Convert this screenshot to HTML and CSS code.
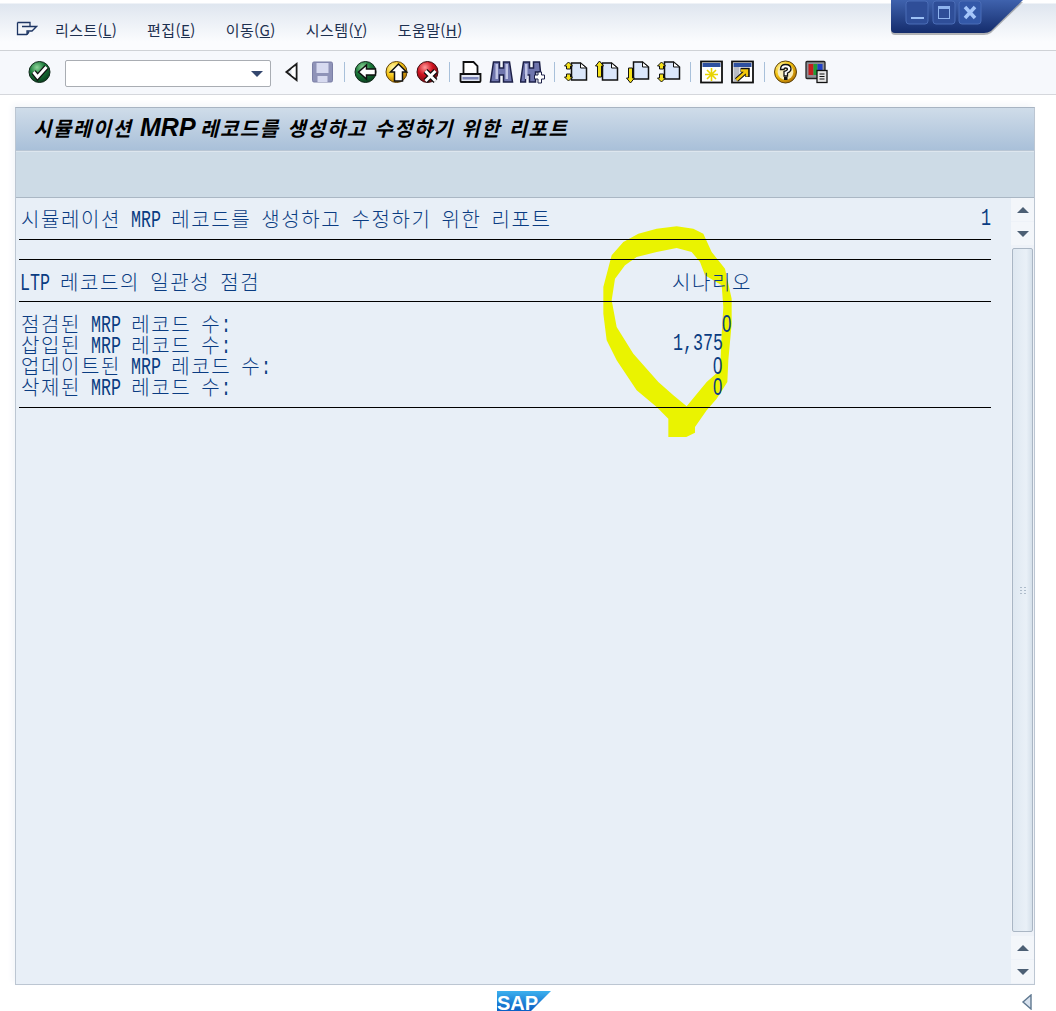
FILE: index.html
```html
<!DOCTYPE html>
<html lang="ko">
<head>
<meta charset="UTF-8">
<meta name="viewport" content="width=device-width, initial-scale=1.0">
<title>시뮬레이션 MRP 레코드를 생성하고 수정하기 위한 리포트</title>
<link rel="stylesheet" href="styles.css">
</head>
<body>

<!-- window buttons -->
<div class="winbox">
  <svg width="150" height="42" viewBox="0 0 150 42">
    <defs>
      <linearGradient id="winfill" x1="0" y1="0" x2="0" y2="1">
        <stop offset="0" stop-color="#3f62ad"/>
        <stop offset="1" stop-color="#142c6c"/>
      </linearGradient>
      <radialGradient id="ballgreen" cx=".38" cy=".28" r=".8">
        <stop offset="0" stop-color="#8fd69a"/>
        <stop offset=".45" stop-color="#1b7a3a"/>
        <stop offset="1" stop-color="#07361a"/>
      </radialGradient>
      <radialGradient id="ballyellow" cx=".35" cy=".3" r=".8">
        <stop offset="0" stop-color="#fff9b0"/>
        <stop offset=".5" stop-color="#f5c412"/>
        <stop offset="1" stop-color="#a56400"/>
      </radialGradient>
      <radialGradient id="ballred" cx=".38" cy=".28" r=".8">
        <stop offset="0" stop-color="#ff9a9a"/>
        <stop offset=".45" stop-color="#d0121f"/>
        <stop offset="1" stop-color="#5e0a10"/>
      </radialGradient>
    </defs>
    <path d="M1 0H133L101 31Q98 33 94 33H5Q1 33 1 29Z" fill="#000" opacity=".28" transform="translate(0 2)"/>
    <path d="M1 0H133L101 31Q98 33 94 33H5Q1 33 1 29Z" fill="url(#winfill)"/>
    <rect x="16" y="1" width="22" height="23" rx="3" fill="#2f4e98" stroke="#4a6cb6"/>
    <rect x="43" y="1" width="22" height="23" rx="3" fill="#2f4e98" stroke="#4a6cb6"/>
    <rect x="69" y="1" width="22" height="23" rx="3" fill="#3358a8" stroke="#4a6cb6"/>
    <rect x="21" y="17" width="13" height="2" fill="#9cc0f5"/>
    <rect x="48.500" y="6.500" width="11" height="12" fill="none" stroke="#8fb4ee"/>
    <rect x="48" y="6" width="12" height="3" fill="#8fb4ee"/>
    <path d="M75 7L85 18M85 7L75 18" stroke="#a5c6fa" stroke-width="3.500"/>
  </svg>
</div>

<div class="menubar">
  <svg class="menu-icon" width="22" height="16" viewBox="0 0 22 16">
    <path d="M1.500 1.500H14V5M1.500 1.500V13.500H11M6 5.500H20.500L16 10H11V13.500M11 13.500L13 11" fill="none" stroke="#1d3563" stroke-width="1.300"/>
  </svg>
  <span class="menu-item">리스트(<u>L</u>)</span>
  <span class="menu-item">편집(<u>E</u>)</span>
  <span class="menu-item">이동(<u>G</u>)</span>
  <span class="menu-item">시스템(<u>Y</u>)</span>
  <span class="menu-item">도움말(<u>H</u>)</span>
</div>

<div class="toolbar">
  <svg class="tool" width="25" height="24" viewBox="0 0 24 24">
    <circle cx="12" cy="12" r="10.500" fill="url(#ballgreen)" stroke="#10281a"/>
    <path d="M6 12L10 17L19 7" fill="none" stroke="#111" stroke-width="5.500"/>
    <path d="M6 12L10 17L19 7" fill="none" stroke="#fff" stroke-width="3"/>
  </svg>
  <div class="combo"><span class="combo-arrow"></span></div>
  <svg class="tool" width="25" height="24" viewBox="0 0 24 24">
    <path d="M17 4V20L7 12Z" fill="#dfe4ec" stroke="#1c1c1c" stroke-width="2"/>
    <path d="M16 6V18L12 15V9Z" fill="#fff"/>
  </svg>
  <svg class="tool" width="25" height="24" viewBox="0 0 24 24">
    <rect x="2" y="2" width="20" height="20" rx="1.500" fill="#8f93b8" stroke="#7b7fa6"/>
    <rect x="6" y="3" width="12" height="10" fill="#d7daf0"/>
    <rect x="7" y="16" width="10" height="6" fill="#d7daf0"/>
  </svg>
  <span class="sep"></span>
  <svg class="tool" width="25" height="24" viewBox="0 0 24 24">
    <circle cx="12" cy="12" r="10.500" fill="url(#ballgreen)" stroke="#10281a"/>
    <path d="M5 12L13 5V9H22V15H13V19Z" fill="#fff" stroke="#111" stroke-width="1.500"/>
  </svg>
  <svg class="tool" width="25" height="24" viewBox="0 0 24 24">
    <circle cx="12" cy="12" r="10.500" fill="url(#ballyellow)" stroke="#5e430a"/>
    <path d="M14 4L22 12H18V21H10V12H6Z" fill="#fff" stroke="#111" stroke-width="1.500"/>
  </svg>
  <svg class="tool" width="25" height="24" viewBox="0 0 24 24">
    <circle cx="12" cy="12" r="10.500" fill="url(#ballred)" stroke="#3e0d10"/>
    <path d="M10 11L20 21M20 11L10 21" stroke="#111" stroke-width="5.500"/>
    <path d="M10 11L20 21M20 11L10 21" stroke="#fff" stroke-width="3"/>
  </svg>
  <span class="sep"></span>
  <svg class="tool" width="25" height="24" viewBox="0 0 24 24">
    <path d="M5 2H15L19 6V14H5Z" fill="#fff" stroke="#111" stroke-width="1.800"/>
    <path d="M2 14H22V21Q22 22 21 22H3Q2 22 2 21Z" fill="#e3e7f2" stroke="#111" stroke-width="1.800"/>
    <rect x="4" y="17" width="16" height="2.500" fill="#7d86b8"/>
  </svg>
  <svg class="tool" width="25" height="24" viewBox="0 0 24 24">
    <path d="M4 2H10V8H14V2H20L23 22H14V15H10V22H1Z" fill="#6f75ad" stroke="#1d2048" stroke-width="1.500"/>
    <rect x="6" y="4" width="2.500" height="15" fill="#c2c6e6"/>
    <rect x="16" y="4" width="2.500" height="15" fill="#c2c6e6"/>
  </svg>
  <svg class="tool" width="25" height="24" viewBox="0 0 24 24">
    <path d="M3 2H9V8H13V2H19L20 12H15V22H9V15H5V22H0Z" fill="#6f75ad" stroke="#1d2048" stroke-width="1.500"/>
    <rect x="4.500" y="4" width="2.500" height="15" fill="#c2c6e6"/>
    <path d="M14 15H17.500V12H21V15H24V19H21V23H17.500V19H14Z" fill="#fff" stroke="#1d2048"/>
  </svg>
  <span class="sep"></span>
  <svg class="tool" width="25" height="24" viewBox="0 0 24 24">
    <path d="M8 3H17L23 8V20H8Z" fill="#dbe7fb" stroke="#111" stroke-width="1.500"/>
    <path d="M17 3V8H23Z" fill="#fff" stroke="#111"/>
    <path d="M5 2L9 6H7V9H3V6H1ZM5 21L1 17H3V14H7V17H9Z" fill="#f6e21a" stroke="#111"/>
  </svg>
  <svg class="tool" width="25" height="24" viewBox="0 0 24 24">
    <path d="M8 3H17L23 8V20H8Z" fill="#dbe7fb" stroke="#111" stroke-width="1.500"/>
    <path d="M17 3V8H23Z" fill="#fff" stroke="#111"/>
    <path d="M5 1L9 6H7V17H3V6H1Z" fill="#f6e21a" stroke="#111"/>
  </svg>
  <svg class="tool" width="25" height="24" viewBox="0 0 24 24">
    <path d="M8 2H17L23 7V19H8Z" fill="#dbe7fb" stroke="#111" stroke-width="1.500"/>
    <path d="M17 2V7H23Z" fill="#fff" stroke="#111"/>
    <path d="M5 23L9 18H7V8H3V18H1Z" fill="#f6e21a" stroke="#111"/>
  </svg>
  <svg class="tool" width="25" height="24" viewBox="0 0 24 24">
    <path d="M8 2H17L23 7V19H8Z" fill="#dbe7fb" stroke="#111" stroke-width="1.500"/>
    <path d="M17 2V7H23Z" fill="#fff" stroke="#111"/>
    <path d="M5 2L9 6H7V9H3V6H1ZM5 22L1 18H3V14H7V18H9Z" fill="#f6e21a" stroke="#111"/>
  </svg>
  <span class="sep"></span>
  <svg class="tool" width="25" height="24" viewBox="0 0 24 24">
    <rect x="1.500" y="1.500" width="21" height="21" fill="#fff" stroke="#111" stroke-width="1.800"/>
    <rect x="3" y="3" width="18" height="4" fill="#2e50a0"/>
    <path d="M12 8V21M5.500 14.500H18.500M7.500 10L16.500 19M16.500 10L7.500 19" stroke="#e8d400" stroke-width="1.600"/>
  </svg>
  <svg class="tool" width="25" height="24" viewBox="0 0 24 24">
    <rect x="1.500" y="1.500" width="21" height="21" fill="#fff" stroke="#111" stroke-width="1.800"/>
    <rect x="3" y="3" width="18" height="4" fill="#2e50a0"/>
    <rect x="3" y="7" width="6" height="14" fill="#b9bcc4"/>
    <path d="M6 20L16 11M10 10H17V17" fill="none" stroke="#111" stroke-width="4.500"/>
    <path d="M6 20L16 11M10.500 10.500H16.500V16.500" fill="none" stroke="#f3c90e" stroke-width="2.400"/>
  </svg>
  <span class="sep"></span>
  <svg class="tool" width="25" height="24" viewBox="0 0 24 24">
    <circle cx="12" cy="12" r="11" fill="url(#ballyellow)" stroke="#5c430c"/>
    <circle cx="12" cy="12" r="7.800" fill="#f8edbb"/>
    <path d="M7 9.500Q7 4.500 12 4.500Q17.500 4.500 17.500 9Q17.500 11.500 14 13V16H10.500V11.500Q14 10.500 14 9Q14 8 12 8Q10.500 8 10.500 9.500Z" fill="#fff" stroke="#111" stroke-width="1.300"/>
    <rect x="10.500" y="17" width="3.500" height="3" fill="#111"/>
  </svg>
  <svg class="tool" width="25" height="24" viewBox="0 0 24 24">
    <rect x="1.500" y="1.500" width="19" height="17" rx="1" fill="#8d8f95" stroke="#222" stroke-width="1.300"/>
    <rect x="4" y="4" width="5" height="11" fill="#c41e1e"/>
    <rect x="9" y="4" width="4" height="11" fill="#1f9c35"/>
    <rect x="13" y="4" width="5" height="11" fill="#2040c8"/>
    <rect x="12.500" y="10.500" width="10" height="12" fill="#e6e6e6" stroke="#111" stroke-width="1.300"/>
    <path d="M15 14H20M15 16.500H20M15 19H20" stroke="#111" stroke-width="1.200"/>
  </svg>
</div>

<div class="panel">
  <div class="title-bar">시뮬레이션 <span class="title-lat">MRP</span> 레코드를 생성하고 수정하기 위한 리포트</div>
  <div class="app-bar"></div>

  <div class="work">
    <!-- marker scribble pasted on the screenshot, sits under the text -->
    <svg class="scribble" width="150" height="220" viewBox="0 0 450 660">
      <path fill-rule="evenodd" fill="#eaf300" d="M235 662L235 605L200 570L140 520L80 430L50 370L40 290L40 210L65 115L100 75L145 50L200 35L260 28L310 35L340 50L365 105L405 155L425 245L425 320L415 430L412 495L380 545L350 580L315 630L315 647L285 662ZM290 568L250 535L205 495L130 410L80 330L65 250L75 185L105 145L140 120L200 105L260 93L305 105L330 135L345 175L395 205L400 270L395 350L392 420L390 460L350 495Z"/>
    </svg>

    <div class="list">
      <div class="row row-head line">
        <span>시뮬레이션 <span class="lat w3">MRP</span> 레코드를 생성하고 수정하기 위한 리포트</span>
        <span class="lat w1">1</span>
      </div>
      <div class="blank line"></div>
      <div class="row row-sub line">
        <span><span class="lat w3">LTP</span> 레코드의 일관성 점검</span>
        <span class="scenario">시나리오</span>
      </div>
      <div class="data">
        <div class="data-row">
          <span>점검된 <span class="lat w3">MRP</span> 레코드 수<span class="lat w1">:</span></span>
          <span class="lat w1 zero num-first">0</span>
        </div>
        <div class="data-row">
          <span>삽입된 <span class="lat w3">MRP</span> 레코드 수<span class="lat w1">:</span></span>
          <span class="lat w5">1,375</span>
        </div>
        <div class="data-row">
          <span>업데이트된 <span class="lat w3">MRP</span> 레코드 수<span class="lat w1">:</span></span>
          <span class="lat w1 zero">0</span>
        </div>
        <div class="data-row">
          <span>삭제된 <span class="lat w3">MRP</span> 레코드 수<span class="lat w1">:</span></span>
          <span class="lat w1 zero">0</span>
        </div>
      </div>
    </div>

    <div class="scrollbar">
      <div class="arrow arrow-up"></div>
      <div class="arrow arrow-down"></div>
      <div class="thumb"><span class="grip"></span></div>
      <div class="arrow arrow-up"></div>
      <div class="arrow arrow-down"></div>
    </div>
  </div>
</div>

<div class="statusbar">
  <svg class="sap-logo" width="56" height="20" viewBox="0 0 56 20">
    <defs>
      <linearGradient id="sapfill" x1="0" y1="0" x2="0" y2="1">
        <stop offset="0" stop-color="#3cb0ee"/>
        <stop offset="1" stop-color="#0a5fc4"/>
      </linearGradient>
    </defs>
    <path d="M1 0H55L35 20H1Z" fill="url(#sapfill)"/>
    <text class="sap-text" x="1" y="19">SAP</text>
  </svg>
  <svg class="status-arrow" width="12" height="16" viewBox="0 0 12 16">
    <path d="M10 1V15L2 8Z" fill="#d8e2ee" stroke="#5f7890" stroke-width="1.400"/>
  </svg>
</div>

</body>
</html>
```

FILE: styles.css
```css
html, body {
  height: 1011px;
  overflow: hidden;
}

body {
  margin: 0;
  padding: 0;
  background-color: #fff;
  font-family: "Noto Sans CJK KR", sans-serif;
  position: relative;
}

.winbox {
  position: absolute;
  top: 0;
  left: 890px;
  line-height: 0;
}

.menubar {
  height: 51px;
  box-sizing: border-box;
  padding: 19px 0 0 16px;
  display: flex;
  align-items: flex-start;
  border-bottom: 1px solid #cfd2d6;
  background: linear-gradient(#ffffff 0, #ffffff 3px, #dfe6ef 4px, #fbfcfe 42px);
}

.menu-icon {
  margin: 2px 17px 0 0;
}

.menu-item {
  font-size: 15px;
  line-height: 22px;
  letter-spacing: 0.4px;
  color: #1d3050;
  margin-right: 30px;
}

.toolbar {
  height: 44px;
  box-sizing: border-box;
  padding: 9px 0 0 27px;
  display: flex;
  align-items: flex-start;
  gap: 6px;
  border-bottom: 1px solid #d5d7dc;
  background-color: #f6f8fc;
}

.tool {
  flex: none;
}

.combo {
  width: 204px;
  height: 25px;
  margin: 0 2px 0 7px;
  border: 1px solid #a9adb3;
  border-radius: 2px;
  background-color: #fff;
  position: relative;
}

.combo-arrow {
  position: absolute;
  right: 7px;
  top: 10px;
  border-top: 6px solid #34476e;
  border-left: 6px solid transparent;
  border-right: 6px solid transparent;
}

.sep {
  flex: none;
  width: 1px;
  height: 20px;
  margin: 2px 2px 0 3px;
  background-color: #a8c0da;
}

.panel {
  margin: 12px 0 0 15px;
  width: 1020px;
  height: 878px;
  box-sizing: border-box;
  border: 1px solid #bcc6d2;
  border-top-color: #a8b4c2;
  display: flex;
  flex-direction: column;
  box-shadow: -3px -3px 6px #f4f6fa;
}

.title-bar {
  height: 43px;
  flex: none;
  box-sizing: border-box;
  padding-left: 17px;
  font-size: 20px;
  line-height: 38px;
  font-weight: 700;
  font-style: italic;
  letter-spacing: 1.5px;
  word-spacing: 0.4px;
  color: #000;
  background: linear-gradient(#cfdce9, #a9c0d9);
  border-bottom: 1px solid #b9c6d4;
}

.title-lat {
  font-family: "Liberation Sans", sans-serif;
  font-size: 25px;
  letter-spacing: 0;
  margin-right: -3px;
}

.app-bar {
  height: 47px;
  flex: none;
  box-sizing: border-box;
  background-color: #cddbe6;
  border-top: 1px solid #dde6ee;
  border-bottom: 1px solid #aab7c4;
}

.work {
  flex: 1;
  display: flex;
  background-color: #e8eff7;
  position: relative;
}

.list {
  width: 972px;
  margin-left: 3px;
  position: relative;
  font-size: 20px;
  font-weight: 300;
  letter-spacing: 1.6px;
  word-spacing: 2.9px;
  color: #0a3c82;
}

/* the list font is a narrow fixed pitch one: 10px a cell, tall glyphs */
.lat {
  display: inline-block;
  font-family: "Liberation Mono", monospace;
  font-size: 23px;
  letter-spacing: 0;
  word-spacing: 0;
  white-space: nowrap;
  transform: scaleX(0.725);
  transform-origin: left center;
}

/* Liberation Mono has a dotted zero, the reference does not */
.zero {
  font-family: "Liberation Sans", sans-serif;
  font-size: 24px;
  transform: scaleX(0.7);
}

.w1 { width: 10px; }
.w3 { width: 30px; }
.w5 { width: 50px; }

.line {
  border-bottom: 1px solid #000;
}

.row {
  display: flex;
  justify-content: space-between;
  box-sizing: border-box;
  padding-left: 2px;
}

.row-head {
  height: 42px;
  line-height: 42px;
}

.blank {
  height: 19px;
  box-sizing: content-box;
}

.row-sub {
  height: 42px;
  padding-left: 1px;
  line-height: 44px;
}

.scenario {
  width: 319px;
}

.data {
  height: 106px;
  box-sizing: border-box;
  padding: 11px 0 0 2px;
  border-bottom: 1px solid #000;
}

.data-row {
  height: 21px;
  line-height: 21px;
  width: 702px;
  display: flex;
  justify-content: space-between;
}

.num-first {
  margin-right: -9px;
}

.scrollbar {
  position: absolute;
  top: 0;
  bottom: 0;
  right: 0;
  width: 23px;
  display: flex;
  flex-direction: column;
  background-color: #eef2f8;
}

.arrow {
  height: 23px;
  flex: none;
  display: flex;
  align-items: center;
  justify-content: center;
  background-color: #f3f6fa;
  margin-bottom: 1px;
}

.arrow::after {
  content: "";
  border-left: 6px solid transparent;
  border-right: 6px solid transparent;
}

.arrow-up::after {
  border-bottom: 6px solid #4c5f74;
}

.arrow-down::after {
  border-top: 6px solid #4c5f74;
}

.thumb {
  flex: 1;
  margin: 2px 1px 4px;
  border: 1px solid #aab6c4;
  border-radius: 2px;
  background: linear-gradient(90deg, #dfe8f1, #e9f0f7 70%, #d5e0ea);
  display: flex;
  align-items: center;
  justify-content: center;
}

.grip {
  width: 7px;
  height: 9px;
  background-image: radial-gradient(#aebccb 1px, transparent 1.2px);
  background-size: 4px 3px;
}

.scribble {
  position: absolute;
  left: 574px;
  top: 19px;
}

.statusbar {
  position: relative;
  height: 26px;
}

.sap-logo {
  position: absolute;
  left: 496px;
  top: 6px;
}

.sap-text {
  font-family: "Liberation Sans", sans-serif;
  font-size: 20px;
  font-weight: 700;
  fill: #fff;
}

.status-arrow {
  position: absolute;
  left: 1021px;
  top: 9px;
}
```
